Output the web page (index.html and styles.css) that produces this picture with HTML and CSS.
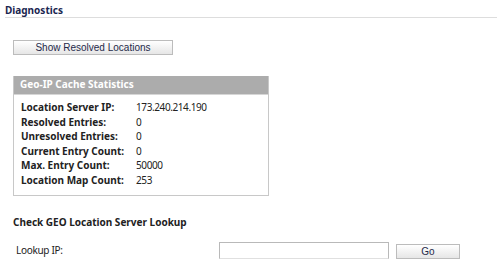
FILE: index.html
```html
<!DOCTYPE html>
<html lang="en">
<head>
    <meta charset="UTF-8">
    <title>Diagnostics</title>
    <link rel="stylesheet" href="styles.css">
</head>
<body>

    <div class="page-title">Diagnostics</div>

    <div class="content">
        <button class="btn btn-wide">Show Resolved Locations</button>

        <div class="stats-box">
            <div class="stats-head">Geo-IP Cache Statistics</div>
            <div class="stats-body">
                <div class="stat-row"><span class="stat-label">Location Server IP:</span><span class="stat-value">173.240.214.190</span></div>
                <div class="stat-row"><span class="stat-label">Resolved Entries:</span><span class="stat-value">0</span></div>
                <div class="stat-row"><span class="stat-label">Unresolved Entries:</span><span class="stat-value">0</span></div>
                <div class="stat-row"><span class="stat-label">Current Entry Count:</span><span class="stat-value">0</span></div>
                <div class="stat-row"><span class="stat-label">Max. Entry Count:</span><span class="stat-value">50000</span></div>
                <div class="stat-row"><span class="stat-label">Location Map Count:</span><span class="stat-value">253</span></div>
            </div>
        </div>

        <div class="section-title">Check GEO Location Server Lookup</div>
        <div class="lookup-row">
            <label class="lookup-label" for="lookup-ip">Lookup IP:</label>
            <input type="text" id="lookup-ip" class="lookup-input">
            <button class="btn btn-go">Go</button>
        </div>
    </div>

</body>
</html>
```

FILE: styles.css
```css
body {
    font-family: "Noto Sans", "DejaVu Sans", sans-serif;
    font-size: 10px;
    color: #222;
    background-color: #ffffff;
    margin: 0;
}

.page-title {
    margin: 0 0 0 5px;
    padding-top: 4px;
    height: 13px;
    font-weight: bold;
    font-size: 10px;
    line-height: 13px;
    color: #1a2650;
    border-bottom: 1px solid #dddddd;
}

.content {
    padding: 22px 0 0 13px;
}

.btn {
    display: block;
    font-family: "Liberation Sans", Arial, sans-serif;
    font-size: 10px;
    color: #1f2a4a;
    background: linear-gradient(#ffffff, #e6e6e6);
    border: 1px solid #bcbcbc;
    border-radius: 0;
    padding: 0;
    margin: 0;
}

.btn-wide {
    width: 160px;
    height: 15px;
    line-height: 13px;
}

.stats-box {
    width: 254px;
    margin-top: 21px;
    border: 1px solid #c8c8c8;
    border-top: none;
}

.stats-head {
    height: 18px;
    line-height: 17px;
    padding-left: 6px;
    background-color: #acacac;
    border-bottom: 1px solid #d6d6d6;
    color: #ffffff;
    font-weight: bold;
}

.stats-body {
    padding: 5px 0 7px 7px;
}

.stat-row {
    display: flex;
    height: 14.6px;
    line-height: 14.6px;
}

.stat-label {
    width: 115px;
    font-weight: bold;
}

.stat-value {
    letter-spacing: -0.4px;
}

.section-title {
    margin-top: 19px;
    font-weight: bold;
    line-height: 14px;
}

.lookup-row {
    display: flex;
    align-items: center;
    margin-top: 13px;
}

.lookup-label {
    width: 203px;
    padding-left: 3px;
    letter-spacing: -0.3px;
}

.lookup-input {
    width: 164px;
    height: 15px;
    margin: 0;
    padding: 0 2px;
    border: 1px solid #b9b9b9;
    border-bottom-color: #e0e0e0;
}

.btn-go {
    width: 64px;
    height: 15px;
    line-height: 13px;
    margin-left: 7px;
    margin-top: 2px;
}
```
